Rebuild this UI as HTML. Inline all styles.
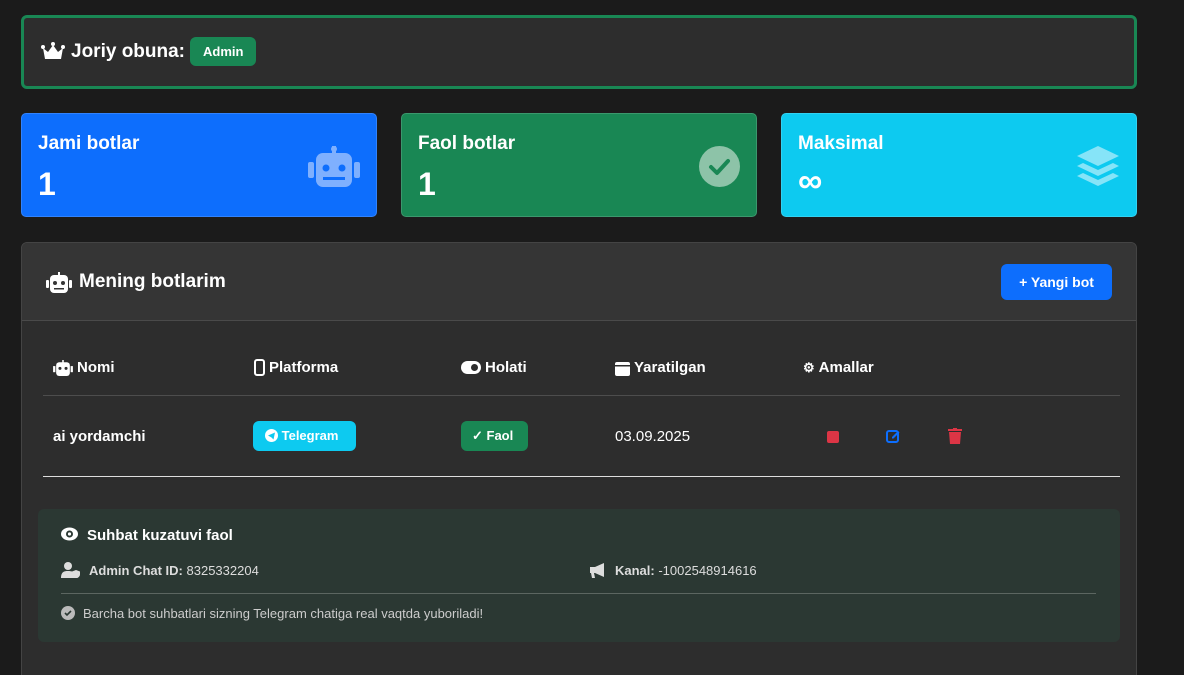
<!DOCTYPE html>
<html><head><style>
*{box-sizing:border-box;margin:0;padding:0}
html,body{width:1184px;height:675px;overflow:hidden}
body{background:#1b1b1b;font-family:"Liberation Sans",sans-serif;color:#fff;position:relative}
.abs{position:absolute}
.top{left:21px;top:15px;width:1116px;height:74px;border:3px solid #198754;border-radius:6px;background:#2d2d2d}
.top .t{position:absolute;left:17px;top:19px;font-size:19px;font-weight:bold;display:flex;align-items:center}
.badge{display:inline-block;border-radius:6px;font-weight:bold;font-size:13px}
.stat{top:113px;width:356px;height:104px;border-radius:5px;border:1px solid rgba(255,255,255,.15)}
.stat .l{position:absolute;left:16px;top:19px;font-size:19px;font-weight:bold}
.stat .n{position:absolute;left:16px;top:52px;font-size:32px;font-weight:bold}
.main{left:21px;top:242px;width:1116px;height:445px;border:1px solid #444;border-radius:6px;background:#2d2d2d;overflow:hidden}
.hd{height:78px;background:#353535;border-bottom:1px solid #4a4a4a;position:relative}
.th{position:absolute;top:116px;font-size:15px;font-weight:bold;display:flex;align-items:center;gap:4px}
.mon{left:16px;top:266px;width:1082px;height:133px;background:#2b3833;border-radius:6px}
</style></head><body>
<div class="abs top"><div class="t">
<svg width="24" height="20" viewBox="0 0 24 20"><path d="M2 6l5 4 5-7 5 7 5-4-2 11H4z" fill="#fff"/><circle cx="2" cy="5" r="2" fill="#fff"/><circle cx="12" cy="2" r="2" fill="#fff"/><circle cx="22" cy="5" r="2" fill="#fff"/></svg>
<span style="margin-left:6px">Joriy obuna:</span>
<span class="badge" style="background:#198754;padding:7px 13px;margin-left:5px">Admin</span></div></div>

<div class="abs stat" style="left:21px;background:#0d6efd"><div class="l">Jami botlar</div><div class="n">1</div>
<svg class="abs" style="left:286px;top:32px" width="52" height="42" viewBox="0 0 52 42"><g fill="#7fb0fe"><rect x="24" y="0" width="4" height="8"/><circle cx="26" cy="3" r="3"/><rect x="8" y="7" width="36" height="34" rx="7"/><rect x="0" y="16" width="6" height="16" rx="2"/><rect x="46" y="16" width="6" height="16" rx="2"/></g><circle cx="18" cy="22" r="3.5" fill="#0d6efd"/><circle cx="34" cy="22" r="3.5" fill="#0d6efd"/><rect x="15" y="31" width="22" height="3" fill="#0d6efd"/></svg></div>
<div class="abs stat" style="left:401px;background:#198754"><div class="l">Faol botlar</div><div class="n">1</div>
<svg class="abs" style="left:297px;top:32px" width="41" height="41" viewBox="0 0 41 41"><circle cx="20.5" cy="20.5" r="20.5" fill="#8dc3a8"/><path d="M12 21l6 6 11-12" stroke="#198754" stroke-width="4" fill="none" stroke-linecap="round" stroke-linejoin="round"/></svg></div>
<div class="abs stat" style="left:781px;background:#0dcaf0"><div class="l">Maksimal</div><div class="n" style="font-size:34px;top:48px">∞</div>
<svg class="abs" style="left:294px;top:32px" width="44" height="42" viewBox="0 0 44 42"><g fill="#86e4f8"><path d="M22 0l21 10-21 10L1 10z"/><path d="M7 17l15 7 15-7 6 3-21 10L1 20z"/><path d="M7 27l15 7 15-7 6 3-21 10L1 30z"/></g></svg></div>

<div class="abs main">
<div class="hd">
<svg class="abs" style="left:24px;top:29px" width="26" height="21" viewBox="0 0 26 21"><g fill="#fff"><rect x="12" y="0" width="2" height="4"/><rect x="4" y="3" width="18" height="18" rx="4"/><rect x="0" y="8" width="3" height="8" rx="1"/><rect x="23" y="8" width="3" height="8" rx="1"/></g><circle cx="9" cy="11" r="2" fill="#353535"/><circle cx="17" cy="11" r="2" fill="#353535"/><rect x="8" y="16" width="10" height="1.5" fill="#353535"/></svg>
<div class="abs" style="left:57px;top:28px;font-size:19px;font-weight:bold">Mening botlarim</div>
<div class="abs badge" style="left:979px;top:21px;width:111px;height:36px;background:#0d6efd;line-height:36px;text-align:center;font-size:14px;border-radius:6px">+ Yangi bot</div>
</div>
<div class="th" style="left:31px"><svg width="20" height="16" viewBox="0 0 26 21"><g fill="#fff"><rect x="4" y="3" width="18" height="18" rx="4"/><rect x="0" y="8" width="3" height="8"/><rect x="23" y="8" width="3" height="8"/><rect x="12" y="0" width="2" height="4"/></g><circle cx="9" cy="11" r="2" fill="#2d2d2d"/><circle cx="17" cy="11" r="2" fill="#2d2d2d"/></svg>Nomi</div>
<div class="th" style="left:232px"><svg width="11" height="17" viewBox="0 0 11 17"><rect x="1" y="1" width="9" height="15" rx="2" stroke="#fff" stroke-width="2" fill="none"/></svg>Platforma</div>
<div class="th" style="left:439px"><svg width="20" height="13" viewBox="0 0 20 13"><rect x="0" y="0" width="20" height="13" rx="6.5" fill="#fff"/><circle cx="13.5" cy="6.5" r="3.5" fill="#2d2d2d"/></svg>Holati</div>
<div class="th" style="left:593px"><svg width="15" height="16" viewBox="0 0 15 16"><rect x="0" y="2" width="15" height="14" rx="2" fill="#fff"/><rect x="0" y="5" width="15" height="1.5" fill="#2d2d2d"/></svg>Yaratilgan</div>
<div class="th" style="left:781px"><span style="font-size:13px">⚙</span>Amallar</div>
<div class="abs" style="left:21px;top:152px;width:1077px;height:1px;background:#4d4d4d"></div>
<div class="abs" style="left:31px;top:185px;font-size:15px;font-weight:bold">ai yordamchi</div>
<div class="abs badge" style="left:231px;top:178px;width:103px;height:30px;background:#0dcaf0;line-height:30px;padding-left:12px"><svg width="13" height="13" viewBox="0 0 13 13" style="vertical-align:-2px"><circle cx="6.5" cy="6.5" r="6.5" fill="#fff"/><path d="M3 6.5l7-3-1.5 7-2-2z" fill="#0dcaf0"/></svg> Telegram</div>
<div class="abs badge" style="left:439px;top:178px;width:67px;height:30px;background:#198754;line-height:30px;padding-left:11px">✓ Faol</div>
<div class="abs" style="left:593px;top:185px;font-size:15px">03.09.2025</div>
<div class="abs" style="left:805px;top:188px;width:12px;height:12px;background:#dc3545;border-radius:2px"></div>
<svg class="abs" style="left:864px;top:186px" width="14" height="14" viewBox="0 0 14 14"><rect x="1" y="2" width="11" height="11" rx="2" stroke="#0d6efd" stroke-width="2" fill="none"/><path d="M6 8l6-6 1.5 1.5-6 6H6z" fill="#0d6efd"/></svg>
<svg class="abs" style="left:926px;top:185px" width="14" height="16" viewBox="0 0 14 16"><rect x="0" y="1" width="14" height="2" fill="#dc3545"/><rect x="5" y="0" width="4" height="2" fill="#dc3545"/><path d="M1 4h12l-1 12H2z" fill="#dc3545"/></svg>
<div class="abs" style="left:21px;top:233px;width:1077px;height:1px;background:#ddd"></div>
<div class="abs mon">
<svg class="abs" style="left:23px;top:18px" width="17" height="14" viewBox="0 0 17 14"><ellipse cx="8.5" cy="7" rx="8.5" ry="6.5" fill="#fff"/><circle cx="8.5" cy="7" r="3.5" fill="#2b3833"/><circle cx="8.5" cy="7" r="1.6" fill="#fff"/></svg>
<div class="abs" style="left:49px;top:18px;font-size:15px;font-weight:bold">Suhbat kuzatuvi faol</div>
<svg class="abs" style="left:23px;top:53px" width="21" height="16" viewBox="0 0 21 16"><circle cx="7" cy="4" r="4" fill="#ddd"/><path d="M0 16c0-6 3-7 7-7s6 1 7 3v4z" fill="#ddd"/><path d="M15 8l4 1.5v3c0 2-2 3.5-4 4-2-.5-4-2-4-4v-3z" fill="#ddd"/></svg>
<div class="abs" style="left:51px;top:54px;font-size:13px;color:#ddd"><b>Admin Chat ID:</b> 8325332204</div>
<svg class="abs" style="left:552px;top:54px" width="17" height="15" viewBox="0 0 17 15"><path d="M0 4h5l9-4v14L5 10H4l1 5H2l-1-5H0z" fill="#ddd"/></svg>
<div class="abs" style="left:577px;top:54px;font-size:13px;color:#ddd"><b>Kanal:</b> -1002548914616</div>
<div class="abs" style="left:23px;top:84px;width:1035px;height:1px;background:#5c6661"></div>
<svg class="abs" style="left:23px;top:97px" width="14" height="14" viewBox="0 0 14 14"><circle cx="7" cy="7" r="7" fill="#bbb"/><path d="M4 7l2 2 4-4" stroke="#2b3833" stroke-width="1.6" fill="none"/></svg>
<div class="abs" style="left:45px;top:97px;font-size:13px;color:#ccc">Barcha bot suhbatlari sizning Telegram chatiga real vaqtda yuboriladi!</div>
</div>
</div>
</body></html>
